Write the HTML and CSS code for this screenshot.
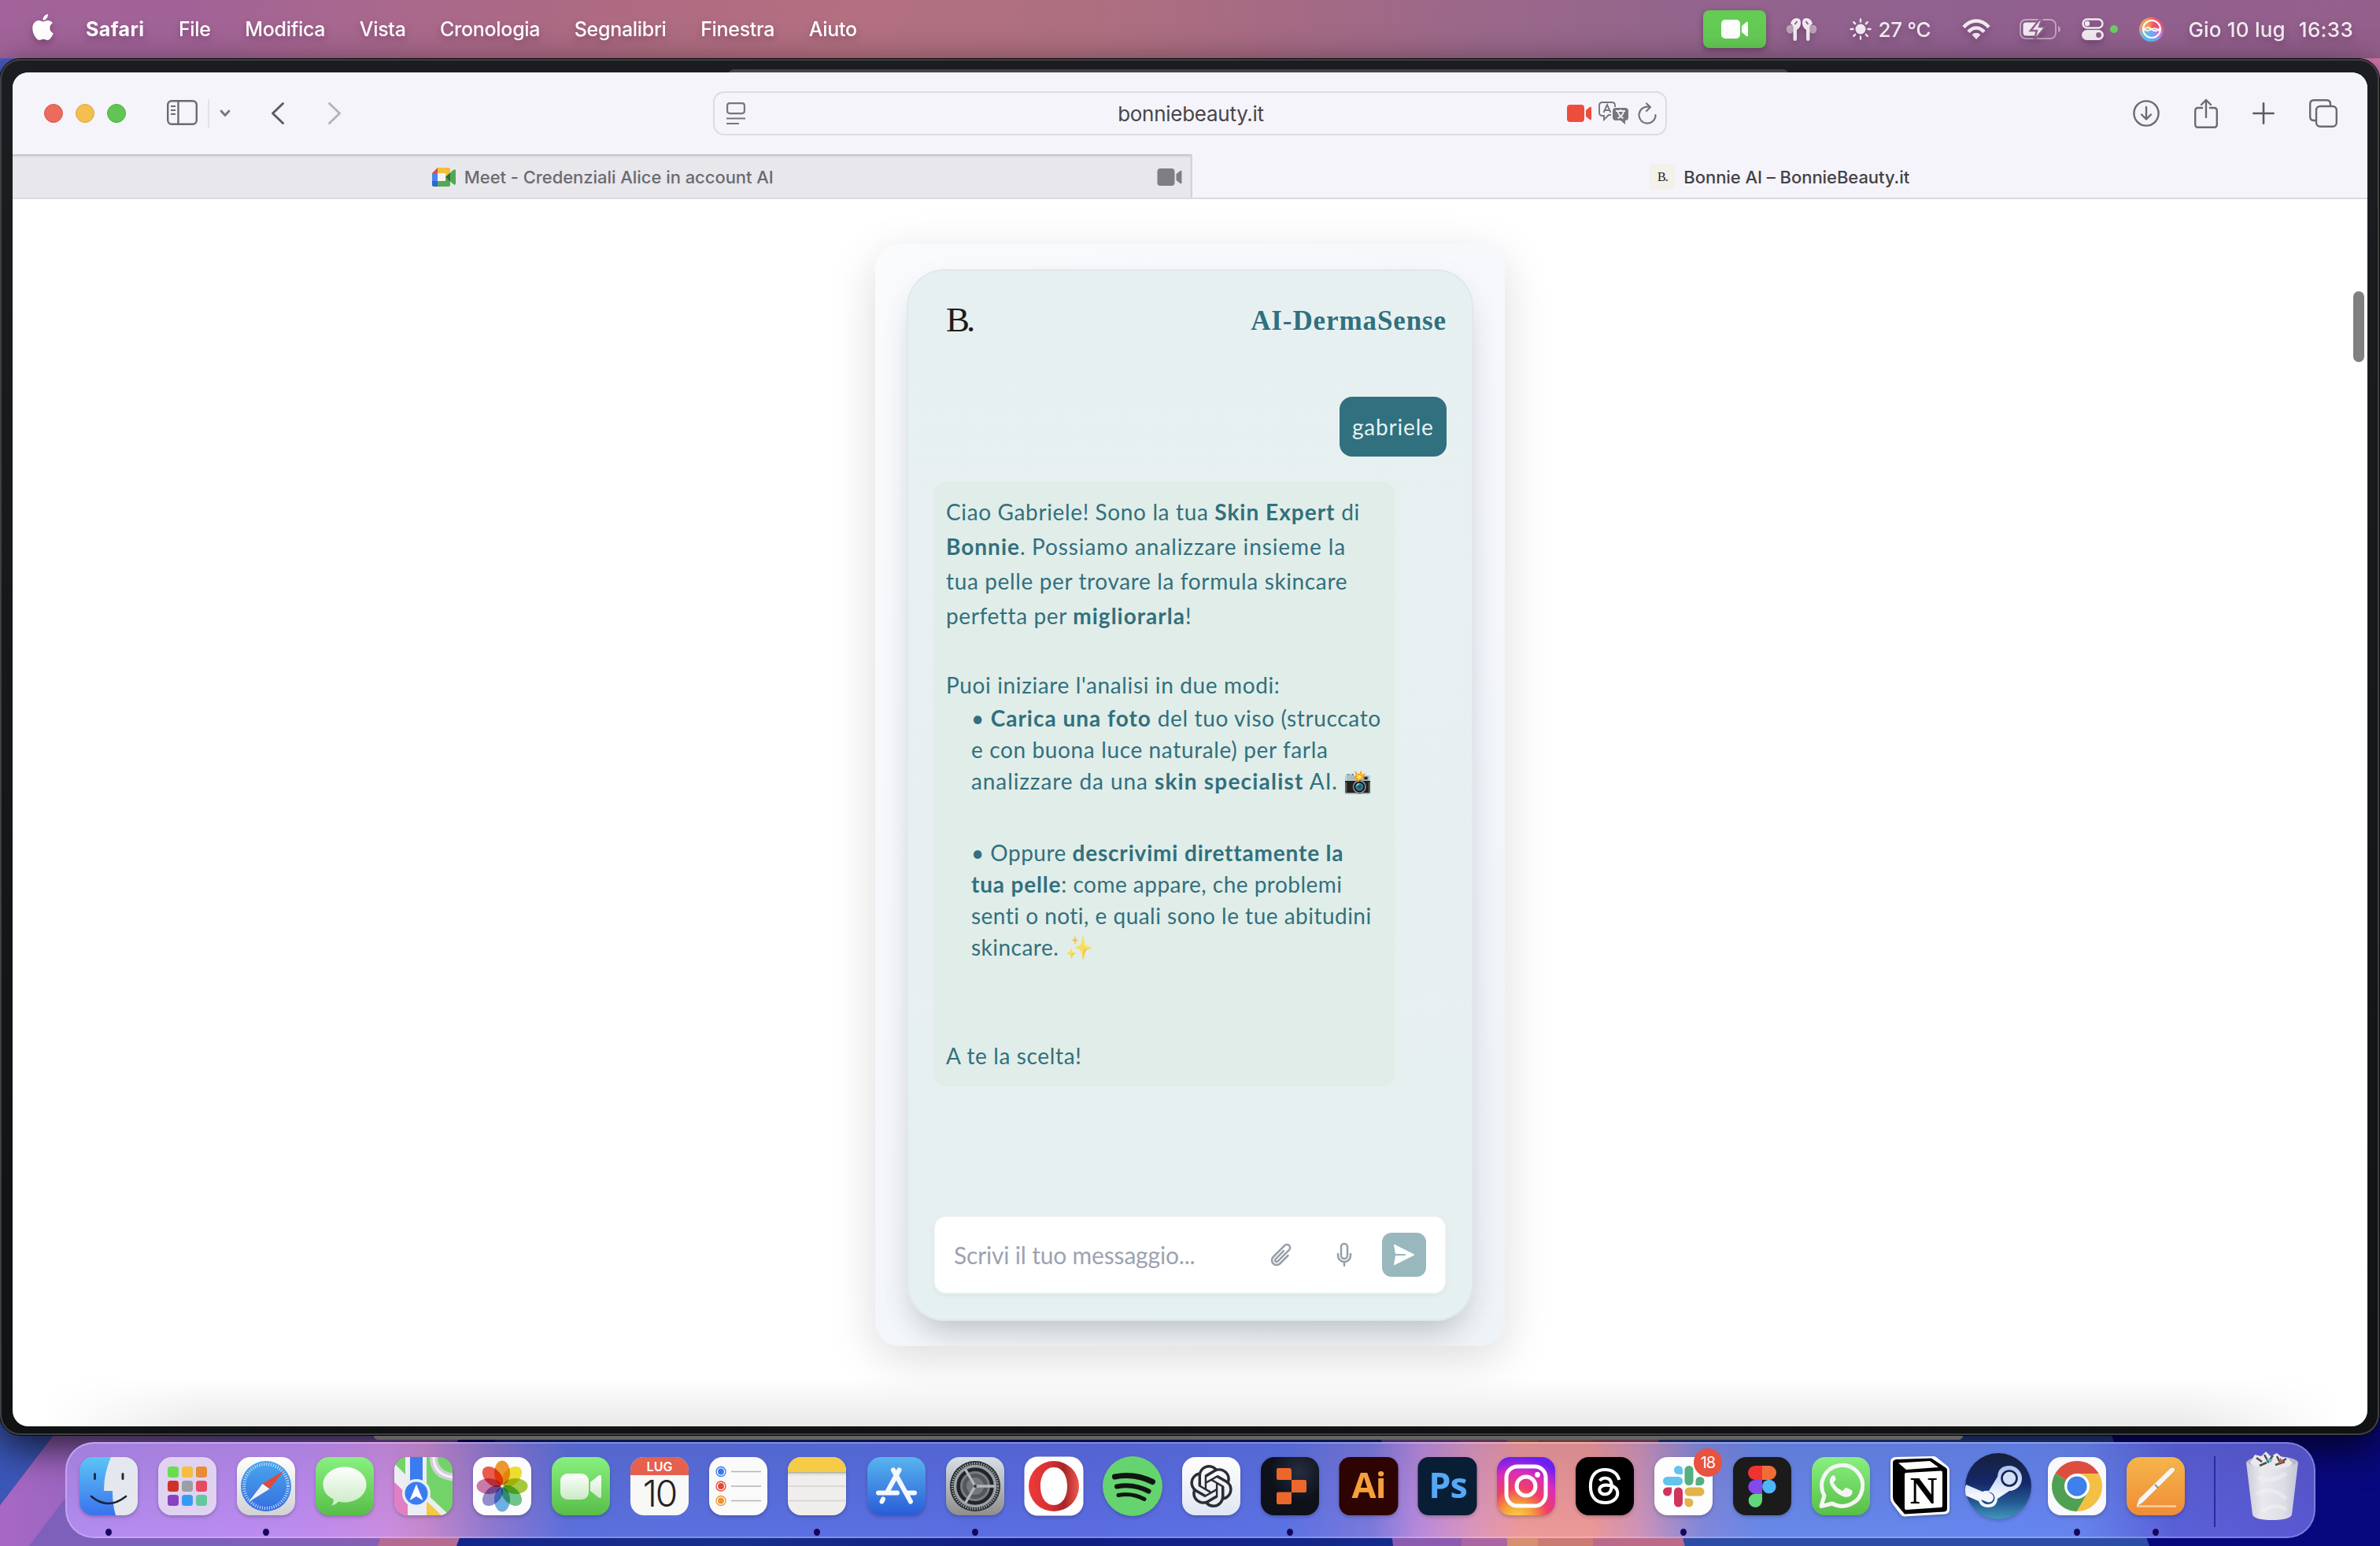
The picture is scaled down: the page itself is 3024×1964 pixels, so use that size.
FILE: index.html
```html
<!DOCTYPE html>
<html lang="it">
<head>
<meta charset="utf-8">
<title>Bonnie AI – BonnieBeauty.it</title>
<link rel="stylesheet" href="styles.css">
</head>
<body>
<svg class="wallpaper" width="3024" height="1964" viewBox="0 0 3024 1964">
  <defs>
    <linearGradient id="wl" x1="0" y1="0" x2="1" y2="0"><stop offset="0" stop-color="#a768c4"/><stop offset=".5" stop-color="#7f60ba"/><stop offset="1" stop-color="#8a5eae"/></linearGradient>
    <linearGradient id="wb" x1="0" y1="0" x2="1" y2="0"><stop offset="0" stop-color="#14258a"/><stop offset=".3" stop-color="#182f8c"/><stop offset=".6" stop-color="#101c7e"/><stop offset="1" stop-color="#152a8c"/></linearGradient>
    <linearGradient id="topline" x1="0" y1="0" x2="1" y2="0"><stop offset="0" stop-color="#4a5cc0"/><stop offset=".2" stop-color="#7a52a8"/><stop offset=".36" stop-color="#b0603c"/><stop offset=".55" stop-color="#b85a60"/><stop offset=".64" stop-color="#23429a"/><stop offset=".86" stop-color="#2a3f9c"/><stop offset=".9" stop-color="#c06a78"/><stop offset="1" stop-color="#d878b4"/></linearGradient>
  </defs>
  <rect width="3024" height="1964" fill="#08087e"/>
  <rect width="3024" height="200" fill="url(#topline)"/>
  <path d="M0 1700H68V1823L0 1912Z" fill="#3b57b8"/>
  <path d="M68 1823L0 1912V1964H500L600 1800H68Z" fill="url(#wl)"/>
  <path d="M85 1900L37 1964H300V1900Z" fill="#7d60ba"/>
  <path d="M500 1900L480 1964H590V1900Z" fill="#b46a92"/>
  <path d="M640 1800L580 1964H1772L1752 1800Z" fill="url(#wb)"/>
  <path d="M1752 1800L1770 1964H1860V1800Z" fill="#8b5bb0"/>
  <path d="M1855 1800H1915V1964H1857Z" fill="#aa66a2"/>
  <path d="M1915 1800H1954V1964H1915Z" fill="#d68f70"/>
  <path d="M1954 1800H2024V1964H1954Z" fill="#cc7a74"/>
  <path d="M2024 1800H2100L2141 1964H2024Z" fill="#bb6a8a"/>
  <path d="M2100 1800H2675L2731 1964H2141Z" fill="#2d4ca6"/>
</svg>

<header class="menubar">
  <svg class="apple" width="27" height="33" viewBox="2 0 20 24" fill="#fff" preserveAspectRatio="none"><path d="M12.152 6.896c-.948 0-2.415-1.078-3.96-1.04-2.04.027-3.91 1.183-4.961 3.014-2.117 3.675-.546 9.103 1.519 12.09 1.013 1.454 2.208 3.09 3.792 3.039 1.52-.065 2.09-.987 3.935-.987 1.831 0 2.35.987 3.96.948 1.637-.026 2.676-1.48 3.676-2.948 1.156-1.688 1.636-3.325 1.662-3.415-.039-.013-3.182-1.221-3.22-4.857-.026-3.04 2.48-4.494 2.597-4.559-1.429-2.09-3.623-2.324-4.39-2.376-2-.156-3.675 1.09-4.61 1.09zM15.53 3.83c.843-1.012 1.4-2.427 1.245-3.83-1.207.052-2.662.805-3.532 1.818-.78.896-1.454 2.338-1.273 3.714 1.338.104 2.715-.688 3.559-1.701"/></svg>
  <nav class="menus">
    <b>Safari</b><span>File</span><span>Modifica</span><span>Vista</span><span>Cronologia</span><span>Segnalibri</span><span>Finestra</span><span>Aiuto</span>
  </nav>
  <div class="status">
    <span class="camera"><svg width="34" height="24" viewBox="0 0 34 24" fill="#fff"><rect width="24" height="24" rx="5"/><path d="M26 8l6-5q2-1 2 1v16q0 2-2 1l-6-5z"/></svg></span>
    <svg class="airpods" width="40" height="32" viewBox="0 0 40 32" fill="#f1e9f0"><ellipse cx="5.500" cy="16" rx="4.800" ry="5.500" opacity=".5"/><ellipse cx="34.500" cy="16" rx="4.800" ry="5.500" opacity=".5"/><path d="M6 9Q8 2 14 2q5 0 5 6t-5 9v12q0 2-2.200 2T9.500 29V18Q11 12 6 9z"/><path d="M34 9Q32 2 26 2q-5 0-5 6t5 9v12q0 2 2.200 2t2.300-2V18Q29 12 34 9z"/><path d="M14.500 6l-3 4M25.500 6l3 4" stroke="#91618d" stroke-width="2"/></svg>
    <svg class="sun" width="28" height="28" viewBox="0 0 28 28" fill="#f1e9f0" stroke="#f1e9f0" stroke-width="2.400" stroke-linecap="round"><circle cx="14" cy="14" r="6.500" stroke="none"/><path d="M14 1.500v3M14 23.500v3M1.500 14h3M23.500 14h3M5.200 5.200l2 2M20.800 20.800l2 2M5.200 22.800l2-2M20.800 7.200l2-2"/></svg>
    <span class="temp">27 °C</span>
    <svg class="wifi" width="36" height="27" viewBox="0 0 36 27" fill="none" stroke="#f1e9f0" stroke-width="4.600"><path d="M2 10.500Q9 2.500 18 2.500t16 8"/><path d="M8 16.500q4.500-5 10-5t10 5"/><path d="M18 26l-5.500-6q5.500-4.500 11 0z" fill="#f1e9f0" stroke="none"/></svg>
    <svg class="battery" width="53" height="28" viewBox="0 0 53 28"><rect x="1" y="2" width="45" height="24" rx="7" fill="none" stroke="#f1e9f0" stroke-opacity=".5" stroke-width="2"/><path d="M49 10q3 1 3 4t-3 4z" fill="#f1e9f0" opacity=".5"/><rect x="4.500" y="5.500" width="20" height="17" rx="4" fill="#f1e9f0"/><path d="M27 0L14 16h8l-4 13L33 11h-8l4-11z" fill="#f1e9f0" stroke="#91618d" stroke-width="2.500"/></svg>
    <svg class="control" width="28" height="28" viewBox="0 0 28 28"><rect x="1.500" y="1.500" width="25" height="11" rx="5.500" fill="none" stroke="#f1e9f0" stroke-width="2.400"/><circle cx="7" cy="7" r="3.200" fill="#f1e9f0"/><rect y="15" width="28" height="13" rx="6.500" fill="#f1e9f0"/><circle cx="21.500" cy="21.500" r="3.400" fill="#91618d"/></svg>
    <i class="privacy"></i>
    <span class="siri"><svg width="30" height="30" viewBox="0 0 30 30" fill="none" stroke="#fff" stroke-width="2"><circle cx="15" cy="15" r="11"/><path d="M4.500 17q4-7 10-2t11-1M4.500 13q3 6 9 2.500T25 17" stroke-width="1.700"/></svg></span>
    <span class="date">Gio 10 lug</span><span class="time">16:33</span>
  </div>
</header>

<main class="frame">
  <i class="peek-top"></i>
  <section class="safari">
    <div class="toolbar">
      <div class="lights"><i class="red"></i><i class="amber"></i><i class="green"></i></div>
      <svg class="side" width="39" height="32" viewBox="0 0 39 32" fill="none" stroke="#6b6a70" stroke-width="2.400"><rect x="1.200" y="1.200" width="36.600" height="29.600" rx="5"/><path d="M14.500 1v30"/><path d="M5 8h6M5 13h6M5 18h6" stroke-width="2"/></svg>
      <i class="rule"></i>
      <svg class="chev" width="14" height="10" viewBox="0 0 14 10" fill="none" stroke="#77767c" stroke-width="2.800" stroke-linecap="round" stroke-linejoin="round"><path d="M2 2l5 5.500L12 2"/></svg>
      <svg class="back" width="18" height="30" viewBox="0 0 18 30" fill="none" stroke="#5c5b61" stroke-width="3" stroke-linecap="round" stroke-linejoin="round"><path d="M15.500 2.500L2.500 15l13 12.500"/></svg>
      <svg class="fwd" width="18" height="30" viewBox="0 0 18 30" fill="none" stroke="#b4b3b9" stroke-width="3" stroke-linecap="round" stroke-linejoin="round"><path d="M2.500 2.500L15.500 15l-13 12.500"/></svg>
      <div class="urlbar">
        <svg width="24" height="28" viewBox="0 0 24 28" fill="none" stroke="#77767c" stroke-width="2.200"><rect x="1.100" y="1.100" width="21.800" height="13" rx="3"/><path d="M0 20.500h24M0 27h16"/></svg>
        <span class="url">bonniebeauty.it</span>
        <svg width="31" height="22" viewBox="0 0 31 22" fill="#ed4e3c"><rect width="22" height="22" rx="4"/><path d="M24 7l5-4q2-1 2 1v14q0 2-2 1l-5-4z"/></svg>
        <svg class="translate" width="40" height="30" viewBox="0 0 40 30" fill="none" stroke="#77767c" stroke-width="1.900"><path d="M16 17h-3l-6 6v-5H5q-4 0-4-4V5q0-4 4-4h12q4 0 4 4v2"/><path d="M6.500 14L11 4 15.500 14M8 11h6"/><path d="M22 8h12q4 0 4 4v8q0 4-4 4v5l-6-5h-6q-4 0-4-4v-8q0-4 4-4z" fill="#77767c" stroke="none"/><path d="M22 12h12M28 10v2M24.500 21.500Q31 18 32 12.500M31.500 21.500Q26 18 24.500 12.500" stroke="#f5f4fa" stroke-width="1.800"/></svg>
        <svg width="24" height="29" viewBox="0 0 24 29" fill="none" stroke="#77767c" stroke-width="2.200" stroke-linecap="round" stroke-linejoin="round"><path d="M14 5.800A10.500 10.500 0 1 0 22.500 16M11 1.500l5 4.500-5 5"/></svg>
      </div>
      <div class="tools">
        <svg width="34" height="34" viewBox="0 0 34 34" fill="none" stroke="#6b6a70" stroke-width="2.400" stroke-linecap="round" stroke-linejoin="round"><circle cx="17" cy="17" r="15.600"/><path d="M17 9v15M11 18.500l6 6 6-6"/></svg>
        <svg width="30" height="38" viewBox="0 0 30 38" fill="none" stroke="#6b6a70" stroke-width="2.400" stroke-linecap="round" stroke-linejoin="round"><path d="M10 12H5q-3.800 0-3.800 3.800V33q0 3.800 3.800 3.800h20q3.800 0 3.800-3.800V15.800Q28.800 12 25 12h-5M15 24V2M9 8l6-6 6 6"/></svg>
        <svg class="plus" width="28" height="28" viewBox="0 0 28 28" stroke="#5c5b61" stroke-width="2.600" stroke-linecap="round"><path d="M14 1.300v25.400M1.300 14h25.400"/></svg>
        <svg width="36" height="36" viewBox="0 0 36 36" fill="none" stroke="#6b6a70" stroke-width="2.400"><rect x="9" y="9" width="25.800" height="25.800" rx="5"/><path d="M8.500 27H6q-4.800 0-4.800-4.800V6Q1.200 1.200 6 1.200h16Q27 1.200 27 6v2.500"/></svg>
      </div>
    </div>
    <div class="tabs">
      <div class="tab idle">
        <svg width="30" height="24" viewBox="0 0 30 24"><path d="M0 7L7 0v7z" fill="#dd4f3e"/><path d="M7 0h14q2 0 2 2v7l-6 5V7H7z" fill="#f3bf3c"/><path d="M0 7h7v10H0z" fill="#4a86ee"/><path d="M0 17h7v7H2q-2 0-2-2z" fill="#2e66c9"/><path d="M7 17h10v-3l6-2v10q0 2-2 2H7z" fill="#52a853"/><path d="M17 12l10-9q3-2 3 1v16q0 3-3 1z" fill="#52a853"/><path d="M17 12l6-5.500v11z" fill="#28703d"/><path d="M7 7h10v10H7z" fill="#f4f4f8"/></svg>
        <span>Meet - Credenziali Alice in account AI</span>
        <svg class="rec" width="32" height="22" viewBox="0 0 31 22" fill="#7f7e84"><rect width="22" height="22" rx="4"/><path d="M24 7l5-4q2-1 2 1v14q0 2-2 1l-5-4z"/></svg>
      </div>
      <div class="tab active"><i class="fav">B.</i><span>Bonnie AI – BonnieBeauty.it</span></div>
    </div>
    <div class="page">
      <article class="stage">
        <div class="chat">
          <div class="chat-head"><span class="mark">B.</span><h1>AI-DermaSense</h1></div>
          <div class="msg me">gabriele</div>
          <div class="msg bot">
            <p>Ciao Gabriele! Sono la tua <b>Skin Expert</b> di<br><b>Bonnie</b>. <span class="wide">Possiamo analizzare insieme la</span><br>tua pelle per trovare la formula skincare<br>perfetta per <b>migliorarla</b>!</p>
            <p class="gap">Puoi iniziare l'analisi in due modi:</p>
            <ul>
              <li>• <b>Carica una foto</b> del tuo viso (struccato<br>e con buona luce naturale) per farla<br><span class="wide">analizzare da una <b>skin specialist</b> AI.</span> <span class="emoji">📸</span></li>
              <li class="snug">• Oppure <b>descrivimi direttamente la<br>tua pelle</b>: come appare, che problemi<br>senti o noti, e quali sono le tue abitudini<br>skincare. <span class="emoji spark">✨</span></li>
            </ul>
            <p class="end">A te la scelta!</p>
          </div>
          <div class="composer">
            <span class="hint">Scrivi il tuo messaggio...</span>
            <svg class="clip" width="32" height="32" viewBox="0 0 24 24" fill="none" stroke="#979eab" stroke-width="1.900" stroke-linecap="round" stroke-linejoin="round"><path d="M18.375 12.739l-7.693 7.693a4.500 4.500 0 0 1-6.364-6.364l10.940-10.940A3 3 0 1 1 19.500 7.372L8.552 18.320m.009-.010l-.010.010m5.699-9.941l-7.810 7.810a1.500 1.500 0 0 0 2.112 2.130l7.693-7.700"/></svg>
            <svg class="mic" width="32" height="32" viewBox="0 0 24 24" fill="none" stroke="#979eab" stroke-width="1.900" stroke-linecap="round" stroke-linejoin="round"><path d="M12 18.750a6 6 0 0 0 6-6v-1.500m-6 7.500a6 6 0 0 1-6-6v-1.500m6 7.500v3.500M12 15.750a3 3 0 0 1-3-3V4.500a3 3 0 1 1 6 0v8.250a3 3 0 0 1-3 3z"/></svg>
            <span class="send"><svg width="28" height="28" viewBox="0 0 28 28"><path d="M1 1.500Q1 .5 2 1l24.500 12.200q1.400.8 0 1.600L2 27q-1 .5-1-.5L3.200 14z" fill="#fff"/><path d="M3 14h13" stroke="#99b8be" stroke-width="2.200"/></svg></span>
          </div>
        </div>
      </article>
      <i class="thumb"></i>
      <i class="shade"></i>
    </div>
  </section>
</main>
<div class="backwin"></div>

<footer class="dock">
  <div class="app open"><svg viewBox="0 0 74 74"><defs><linearGradient id="a1" x2="0" y2="1"><stop stop-color="#5cc4f6"/><stop offset="1" stop-color="#3a72ee"/></linearGradient><clipPath id="sq"><rect width="74" height="74" rx="17"/></clipPath></defs><g clip-path="url(#sq)"><rect width="74" height="74" fill="url(#a1)"/><path d="M40 0Q31 20 31 43h11q0 18 4 31h28V0z" fill="#e4e8ee"/></g><path d="M19.500 21.500v6M55 21.500v6" stroke="#222c3c" stroke-width="3" stroke-linecap="round"/><path d="M15 50q21 18 44 0" fill="none" stroke="#1c2432" stroke-width="2.600" stroke-linecap="round"/></svg></div>
  <div class="app"><svg viewBox="0 0 74 74"><rect width="74" height="74" rx="17" fill="#dfd3f1"/><rect x="12" y="12" width="14" height="14" rx="3.500" fill="#6bdb50"/><rect x="30" y="12" width="14" height="14" rx="3.500" fill="#f3bf3d"/><rect x="48" y="12" width="14" height="14" rx="3.500" fill="#e88c35"/><rect x="12" y="30" width="14" height="14" rx="3.500" fill="#cc3428"/><rect x="30" y="30" width="14" height="14" rx="3.500" fill="#9b9fa4"/><rect x="48" y="30" width="14" height="14" rx="3.500" fill="#ea4a60"/><rect x="12" y="48" width="14" height="14" rx="3.500" fill="#8a3fc4"/><rect x="30" y="48" width="14" height="14" rx="3.500" fill="#389bf2"/><rect x="48" y="48" width="14" height="14" rx="3.500" fill="#62c89c"/></svg></div>
  <div class="app open"><svg viewBox="0 0 74 74"><defs><linearGradient id="a3" x2="0" y2="1"><stop stop-color="#fff"/><stop offset="1" stop-color="#d2d2d4"/></linearGradient><linearGradient id="a3b" x2="0" y2="1"><stop stop-color="#4aa6ec"/><stop offset="1" stop-color="#356ee0"/></linearGradient></defs><rect width="74" height="74" rx="17" fill="url(#a3)"/><circle cx="37" cy="37" r="32" fill="url(#a3b)"/><circle cx="37" cy="37" r="28" fill="none" stroke="#cfe3fa" stroke-width="4" stroke-dasharray="1 2"/><path d="M60 17L32.500 34l9 6.500z" fill="#e0493c"/><path d="M15 57l17.500-23 9 6.500z" fill="#f2f2f4"/></svg></div>
  <div class="app"><svg viewBox="0 0 74 74"><defs><linearGradient id="gr" x2="0" y2="1"><stop stop-color="#88f080"/><stop offset="1" stop-color="#58be48"/></linearGradient><linearGradient id="wh" x2="0" y2="1"><stop stop-color="#fdfffd"/><stop offset="1" stop-color="#cbeac4"/></linearGradient></defs><rect width="74" height="74" rx="17" fill="url(#gr)"/><path d="M37 12.500c15 0 27.500 9.500 27.500 22.500S52 57.500 37 57.500q-4 0-8-1-3 4-9 5 3.500-4 2.500-8Q9.500 47 9.500 35C9.500 22 22 12.500 37 12.500z" fill="url(#wh)"/></svg></div>
  <div class="app"><svg viewBox="0 0 74 74"><g clip-path="url(#sq)"><rect width="74" height="74" fill="#72d468"/><path d="M0 8l70 66H0z" fill="#ecedf2"/><path d="M0 32l18 16v26H0z" fill="#e07fc4"/><path d="M40 74V55l20 19z" fill="#f4c843"/><path d="M14 0h27v74H17V50L0 30V8l14 14z" fill="#eceef3"/><path d="M0 8V0h14v22z" fill="#72d468"/><path d="M20 0h16v40H20z" fill="#3a7cf0"/><path d="M50 0q0 24 28 26" fill="none" stroke="#cfd0d6" stroke-width="10"/><path d="M50 0q0 24 28 26" fill="none" stroke="#f3f3f6" stroke-width="3"/></g><circle cx="28" cy="46" r="18" fill="#e9ecf4"/><circle cx="28" cy="46" r="14.500" fill="#3a7cf0"/><path d="M28 34.500l8.500 20.500-8.500-5-8.500 5z" fill="#fff"/></svg></div>
  <div class="app"><svg viewBox="0 0 74 74"><rect width="74" height="74" rx="17" fill="#fcfcfd"/><g class="petals"><ellipse cx="37" cy="20" rx="10" ry="15.500" fill="#f09a2e"/><ellipse cx="37" cy="20" rx="10" ry="15.500" fill="#f0e030" transform="rotate(45 37 37)"/><ellipse cx="37" cy="20" rx="10" ry="15.500" fill="#a8cc3c" transform="rotate(90 37 37)"/><ellipse cx="37" cy="20" rx="10" ry="15.500" fill="#6fc88a" transform="rotate(135 37 37)"/><ellipse cx="37" cy="20" rx="10" ry="15.500" fill="#70b2e2" transform="rotate(180 37 37)"/><ellipse cx="37" cy="20" rx="10" ry="15.500" fill="#9490d0" transform="rotate(225 37 37)"/><ellipse cx="37" cy="20" rx="10" ry="15.500" fill="#cc7aac" transform="rotate(270 37 37)"/><ellipse cx="37" cy="20" rx="10" ry="15.500" fill="#ee5c4c" transform="rotate(315 37 37)"/></g></svg></div>
  <div class="app"><svg viewBox="0 0 74 74"><rect width="74" height="74" rx="17" fill="url(#gr)"/><rect x="11" y="21" width="36" height="33" rx="9" fill="url(#wh)"/><path d="M49 32l10-8q4-2.500 4 1v25q0 3.500-4 1l-10-8z" fill="url(#wh)"/></svg></div>
  <div class="app"><div class="calendar"><span>LUG</span><b>10</b></div></div>
  <div class="app"><svg viewBox="0 0 74 74"><rect width="74" height="74" rx="17" fill="#fbfafa"/><g stroke="#b4b3b5" stroke-width="1.400"><path d="M28 18.500h38M28 37h38M28 55.500h38"/></g><g fill="none" stroke-width="1.300"><circle cx="15" cy="18.500" r="6" stroke="#3478f0"/><circle cx="15" cy="37" r="6" stroke="#e04a36"/><circle cx="15" cy="55.500" r="6" stroke="#ec9530"/></g><circle cx="15" cy="18.500" r="3.900" fill="#3478f0"/><circle cx="15" cy="37" r="3.900" fill="#e04a36"/><circle cx="15" cy="55.500" r="3.900" fill="#ec9530"/></svg></div>
  <div class="app open"><svg viewBox="0 0 74 74"><g clip-path="url(#sq)"><rect width="74" height="74" fill="#efeeec"/><rect width="74" height="19" fill="#f6cb45"/><path d="M0 20h74" stroke="#a8a49a" stroke-width="1.400"/><path d="M0 22.500h74" stroke="#c2beb4" stroke-dasharray="1.500 1.500"/><path d="M0 37h74M0 55.500h74" stroke="#d3d2d0" stroke-width="1.500"/></g></svg></div>
  <div class="app shift"><svg viewBox="0 0 74 74"><defs><linearGradient id="as" x2="0" y2="1"><stop stop-color="#58b4ee"/><stop offset="1" stop-color="#2a5cd8"/></linearGradient></defs><rect width="74" height="74" rx="17" fill="url(#as)"/><g stroke="#f4f8ff" stroke-width="6" stroke-linecap="round"><path d="M33 16.500l22 40M40.500 16.500L26 43M20 53.500L18.500 56.500M14 45.500h24M52 45.500h8"/></g></svg></div>
  <div class="app open"><svg viewBox="0 0 74 74"><defs><linearGradient id="se" x2="0" y2="1"><stop stop-color="#d6e0e6"/><stop offset="1" stop-color="#8f8e8c"/></linearGradient></defs><rect width="74" height="74" rx="17" fill="url(#se)"/><circle cx="37" cy="37" r="32" fill="#22262a"/><circle cx="37" cy="37" r="29" fill="none" stroke="#9da3a6" stroke-width="3" stroke-dasharray="1.500 1.500"/><circle cx="37" cy="37" r="25.500" fill="none" stroke="#9ca2a5" stroke-width="3.500"/><circle cx="37" cy="37" r="17.500" fill="#54585b" stroke="#777d80" stroke-width="3"/><circle cx="37" cy="37" r="11" fill="#74797c"/><path d="M37 37h25M37 37L24.500 15.500M37 37L24.500 58.500" stroke="#b3b8ba" stroke-width="3.400"/><circle cx="37" cy="37" r="2" fill="#333"/></svg></div>
  <div class="app"><svg viewBox="0 0 74 74"><rect x="-.5" y="-.5" width="75" height="75" rx="17" fill="#fff"/><defs><linearGradient id="op"><stop stop-color="#ee3a3a"/><stop offset=".45" stop-color="#d42f33"/><stop offset=".7" stop-color="#a82426"/><stop offset="1" stop-color="#ef5a52"/></linearGradient></defs><path fill-rule="evenodd" d="M37 5a32 32 0 1 1 0 64 32 32 0 0 1 0-64zm0 8c-11 0-17 11-17 24s6 24 17 24 17-11 17-24-6-24-17-24z" fill="url(#op)"/></svg></div>
  <div class="app"><svg viewBox="0 0 74 74"><circle cx="37" cy="37" r="38" fill="#65d46e"/><g fill="none" stroke="#101612" stroke-linecap="round"><path d="M14.500 25q25-5 48 6.500" stroke-width="7"/><path d="M17 37.500q21-4.500 40.500 6" stroke-width="6"/><path d="M19 48.500q17-3.500 33 5" stroke-width="5"/></g></svg></div>
  <div class="app"><svg viewBox="0 0 74 74"><defs><linearGradient id="gp" x2="0" y2="1"><stop stop-color="#fff"/><stop offset="1" stop-color="#dfe6f2"/></linearGradient></defs><rect width="74" height="74" rx="17" fill="url(#gp)"/><path transform="translate(10 10) scale(2.250)" fill="#2a2e33" d="M22.282 9.821a5.985 5.985 0 0 0-.516-4.911 6.046 6.046 0 0 0-6.510-2.900A6.065 6.065 0 0 0 4.981 4.182a5.985 5.985 0 0 0-3.998 2.900 6.046 6.046 0 0 0 .743 7.097 5.980 5.980 0 0 0 .511 4.911 6.051 6.051 0 0 0 6.515 2.900A5.985 5.985 0 0 0 13.260 24a6.056 6.056 0 0 0 5.772-4.206 5.989 5.989 0 0 0 3.998-2.900 6.056 6.056 0 0 0-.748-7.073zm-9.022 12.608a4.476 4.476 0 0 1-2.876-1.041l.142-.080 4.778-2.758a.795.795 0 0 0 .393-.681v-6.737l2.020 1.169a.071.071 0 0 1 .038.052v5.583a4.504 4.504 0 0 1-4.495 4.494zm-9.661-4.125a4.471 4.471 0 0 1-.535-3.014l.142.085 4.783 2.758a.771.771 0 0 0 .781 0l5.843-3.369v2.332a.080.080 0 0 1-.033.062L9.740 19.950a4.499 4.499 0 0 1-6.141-1.646zM2.341 7.896a4.485 4.485 0 0 1 2.366-1.973V11.600a.766.766 0 0 0 .388.677l5.814 3.354-2.020 1.169a.076.076 0 0 1-.071 0l-4.830-2.787A4.504 4.504 0 0 1 2.341 7.872zm16.596 3.856L13.104 8.364 15.119 7.200a.076.076 0 0 1 .071 0l4.830 2.791a4.494 4.494 0 0 1-.677 8.104v-5.677a.790.790 0 0 0-.407-.667zm2.011-3.023l-.142-.085-4.774-2.782a.776.776 0 0 0-.785 0L9.409 9.230V6.897a.066.066 0 0 1 .028-.062l4.830-2.787a4.499 4.499 0 0 1 6.680 4.660zM8.307 12.863l-2.020-1.164a.080.080 0 0 1-.038-.057V6.074a4.499 4.499 0 0 1 7.376-3.454l-.142.081L8.704 5.459a.795.795 0 0 0-.393.681zm1.098-2.365l2.602-1.500 2.607 1.500v2.999l-2.597 1.500-2.607-1.500z"/></svg></div>
  <div class="app open"><svg viewBox="0 0 74 74"><defs><radialGradient id="rp" cx=".65" cy=".25"><stop stop-color="#262d40"/><stop offset="1" stop-color="#0e1119"/></radialGradient></defs><rect width="74" height="74" rx="17" fill="url(#rp)"/><path d="M22 14h14q3 0 3 3v12H22q-2 0-2-2V16q0-2 2-2zM39 29h17q2 0 2 2v12q0 2-2 2H39zM22 44.500h17V58q0 2-2 2H22q-2 0-2-2V46.500q0-2 2-2z" fill="#ec672c"/></svg></div>
  <div class="app"><svg viewBox="0 0 74 74"><rect x="-.5" width="75" height="74" rx="14" fill="#2e0403"/><text x="37" y="52" text-anchor="middle" class="adobe" fill="#f5a13b">Ai</text></svg></div>
  <div class="app"><svg viewBox="0 0 74 74"><rect x="-.5" width="75" height="74" rx="14" fill="#071e35"/><text x="37.500" y="52" text-anchor="middle" class="adobe" fill="#54a8f8">Ps</text></svg></div>
  <div class="app"><svg viewBox="0 0 74 74"><defs><radialGradient id="ig" cx=".35" cy="1.050" r="1.050"><stop stop-color="#f9d44a"/><stop offset=".25" stop-color="#f6a038"/><stop offset=".5" stop-color="#ee3f66"/><stop offset=".75" stop-color="#dc2cb8"/><stop offset="1" stop-color="#6a20f4"/></radialGradient></defs><rect width="74" height="74" rx="17" fill="url(#ig)"/><rect x="12" y="12" width="50" height="50" rx="14" fill="none" stroke="#fff" stroke-width="5"/><circle cx="37" cy="37" r="12" fill="none" stroke="#fff" stroke-width="5"/><circle cx="51.500" cy="22.500" r="3.400" fill="#fff"/></svg></div>
  <div class="app"><svg viewBox="0 0 74 74"><rect width="74" height="74" rx="17"/><path transform="translate(14 14) scale(1.920)" fill="#fff" d="M12.186 24h-.007c-3.581-.024-6.334-1.205-8.184-3.509C2.350 18.440 1.500 15.586 1.472 12.010v-.017c.030-3.579.879-6.430 2.525-8.482C5.845 1.205 8.600.024 12.180 0h.014c2.746.020 5.043.725 6.826 2.098 1.677 1.290 2.858 3.130 3.509 5.467l-2.040.569c-1.104-3.960-3.898-5.984-8.304-6.015-2.910.022-5.110.936-6.540 2.717C4.307 6.504 3.616 8.914 3.589 12c.027 3.086.718 5.496 2.057 7.164 1.430 1.783 3.631 2.698 6.540 2.717 2.623-.020 4.358-.631 5.800-2.045 1.647-1.613 1.618-3.593 1.090-4.798-.310-.710-.873-1.300-1.634-1.750-.192 1.352-.622 2.446-1.284 3.272-.886 1.102-2.140 1.704-3.730 1.790-1.202.065-2.361-.218-3.259-.801-1.063-.689-1.685-1.740-1.752-2.964-.065-1.190.408-2.285 1.330-3.082.880-.760 2.119-1.207 3.583-1.291a13.853 13.853 0 0 1 3.020.142c-.126-.742-.375-1.332-.750-1.757-.513-.586-1.308-.883-2.359-.890h-.029c-.844 0-1.992.232-2.721 1.320L7.734 7.847c.980-1.454 2.568-2.256 4.478-2.256h.044c3.194.020 5.097 1.975 5.287 5.388.108.046.216.094.321.142 1.490.700 2.580 1.761 3.154 3.070.797 1.820.871 4.790-1.548 7.158-1.850 1.810-4.094 2.628-7.277 2.650zm1.003-11.690c-.242 0-.487.007-.739.021-1.836.103-2.980.946-2.916 2.143.067 1.256 1.452 1.839 2.784 1.767 1.224-.065 2.818-.543 3.086-3.710a10.500 10.500 0 0 0-2.215-.221z"/></svg></div>
  <div class="app open"><svg viewBox="0 0 74 74"><rect width="74" height="74" rx="17" fill="#fdfdfe"/><g fill="#62c3ee"><path d="M36 22h-5.500a5.500 5.500 0 1 1 5.500-5.500z"/><rect x="11" y="25" width="25" height="11" rx="5.500"/></g><g fill="#54b07e"><rect x="38.500" y="11" width="11" height="25" rx="5.500"/><path d="M52.500 36v-5.500A5.500 5.500 0 1 1 58 36z"/></g><g fill="#e3b34a"><rect x="38.500" y="38.500" width="25" height="11" rx="5.500"/><path d="M38.500 52.500H44a5.500 5.500 0 1 1-5.500 5.500z"/></g><g fill="#d0335c"><rect x="25" y="38.500" width="11" height="25" rx="5.500"/><path d="M22 38.500V44a5.500 5.500 0 1 1-5.500-5.500z"/></g></svg><em>18</em></div>
  <div class="app"><svg viewBox="0 0 74 74"><rect width="74" height="74" rx="17" fill="#1c1b1b"/><path d="M37 11v18h-9a9 9 0 0 1 0-18z" fill="#ee3430"/><path d="M37 11h9a9 9 0 0 1 0 18h-9z" fill="#ef6e38"/><path d="M37 29v17.500h-9a8.750 8.750 0 0 1 0-17.500z" fill="#8547ee"/><circle cx="45.800" cy="37.500" r="8.800" fill="#50b4f8"/><path d="M37 46.500V55a8.700 8.700 0 1 1-9-8.500z" fill="#62d67a"/></svg></div>
  <div class="app"><svg viewBox="0 0 74 74"><rect width="74" height="74" rx="17" fill="url(#gr)"/><path d="M12 62.500l4-13.500A26 26 0 1 1 26 59z" fill="none" stroke="#f5f6f4" stroke-width="5" stroke-linejoin="round"/><path d="M29 23.500q-2-1-4 1-4 5-.5 12 6 10.500 16.500 14 7 1.500 10-3.500 1.500-4-.5-5l-6-3q-1.500-.5-2.700 1l-2.500 3q-7.500-3-11.800-10.500l2.500-3q.8-1 .3-2.500z" fill="#f5f6f4"/></svg></div>
  <div class="app"><svg viewBox="0 0 74 74"><path d="M6 0L52 -1Q56 -1.500 58 0L73 12Q75 14 75 17V66Q75 72 69 72.500L18 75.500Q15 75.500 13 73L3 60Q0 56 0 52V6Q0 1 6 0z" fill="#fff"/><path d="M7 3L52 1.500 71 14Q72 15 72 17V65Q72 69 68 69.500L18 72.500 5 57Q3 54 3 50V7Q3 4 7 3z"/><path d="M10 7.500L50 5 61 13 20 16z" fill="#fff"/><path d="M18 22q0-2 2-2L64 17.500q2 0 2 2V62q0 2-2 2L20 67q-2 0-2-2z" fill="#fff"/><text x="42" y="59" text-anchor="middle" class="notion">N</text></svg></div>
  <div class="app steam"><svg viewBox="0 0 84 84"><defs><linearGradient id="st" x2="0" y2="1"><stop stop-color="#15203a"/><stop offset=".45" stop-color="#15286a"/><stop offset=".75" stop-color="#235c94"/><stop offset="1" stop-color="#4298bc"/></linearGradient><linearGradient id="sw" x2="0" y2="1"><stop stop-color="#a9c0f0"/><stop offset=".7" stop-color="#f4f6fe"/></linearGradient></defs><circle cx="42" cy="42" r="42" fill="url(#st)"/><path d="M1 40L22 49q4-2 8-1L41 30Q42 16 56 16A16 16 0 0 1 56 48L41 58Q40 69 29 69 20 69 17 61L1 54Q-1 47 1 40z" fill="url(#sw)"/><circle cx="56" cy="32" r="9.500" fill="#d3def7" stroke="#15244e" stroke-width="2.600"/><path d="M20 59q3 6 9 6 8-1 8.500-8Q37 50 29 49l5 3q3 3 1.500 7-3 5-8 3z" fill="#1e4684"/></svg></div>
  <div class="app open"><svg viewBox="0 0 74 74"><rect width="74" height="74" rx="17" fill="#f8f8fd"/><path d="M37 37L9.300 21A32 32 0 0 1 64.700 21z" fill="#dc4f3e"/><path d="M37 37L9.300 21A32 32 0 0 0 37 69L50.900 45z" fill="#4fa052"/><path d="M37 21h27.700A32 32 0 0 1 37 69l13.900-24z" fill="#f3c044"/><circle cx="37" cy="37" r="16" fill="#fff"/><circle cx="37" cy="37" r="12.600" fill="#3f80ea"/></svg></div>
  <div class="app open"><svg viewBox="0 0 74 74"><defs><linearGradient id="pg" x2="0" y2="1"><stop stop-color="#f5b54a"/><stop offset="1" stop-color="#ef8c38"/></linearGradient></defs><rect width="74" height="74" rx="17" fill="url(#pg)"/><path d="M13 62.500h50" stroke="#fbd0a4" stroke-width="2.400"/><path d="M12.500 62.500L16 53 55 15q3-2.500 5-1t-.5 5L20 58z" fill="#f6f5f6"/><path d="M36 35l4 4" stroke="#888" stroke-width="2"/></svg></div>
  <i class="split"></i>
  <svg class="trash" width="68" height="88" viewBox="0 0 68 88"><defs><linearGradient id="tr"><stop stop-color="#c9cbd8"/><stop offset=".3" stop-color="#e9e9ee"/><stop offset=".7" stop-color="#dedfe6"/><stop offset="1" stop-color="#c4c6d6"/></linearGradient></defs><ellipse cx="34" cy="14" rx="33" ry="8" fill="#b7b8cc"/><path d="M6 14L12 4l8 2 6-6 6 6 8-4 6 5 8 1 6 7-8 8H14z" fill="#e9e9ea"/><path d="M14 8l7 5M24 4l5 9 6-8M40 6l4 8 8-5M18 18l9-4M38 17l12-4" stroke="#4d4d52" stroke-width="2.500" fill="none"/><path d="M26 10l6 4 3-5z" fill="#4fc0d8"/><path d="M44 8l5 5-7 3z" fill="#c0574c"/><path d="M1 14q33 16 66 0L59 80q-2 7-25 7T9 80z" fill="url(#tr)"/><path d="M16 32q12 10 36-4M14 54q18-12 38 6M22 76q14-12 30-2" stroke="#f5f5f8" stroke-width="5" fill="none" opacity=".45"/></svg>
</footer>
</body>
</html>
```
FILE: styles.css
```css
* { box-sizing: border-box; }
body {
  margin: 0; width: 3024px; height: 1964px; overflow: hidden; position: relative;
  display: flex; flex-direction: column; background: #08087e;
  font-family: Inter, "Liberation Sans", sans-serif;
}
svg { display: block; flex: none; }
i, em { font-style: normal; }
.wallpaper { position: absolute; left: 0; top: 0; }

/* menu bar */
.menubar {
  position: relative; height: 74px; flex: none; display: flex; align-items: center; padding: 0 34px 0 41px;
  background: linear-gradient(90deg, #a16399 0, #a16397 230px, #a9688c 500px, #ad6a82 750px, #b37081 1080px, #ad6f80 1400px, #a56a84 1640px, #9a688a 1900px, #93648c 2150px, #90608f 2500px, #945f8b 3024px);
  color: #fff; font-size: 25px; font-weight: 500; letter-spacing: -.3px; white-space: pre;
}
.menubar svg, .menus { filter: drop-shadow(0 4px 4px rgba(40, 0, 40, .28)); }
.apple { margin-top: -6px; }
.menus { display: flex; gap: 43.500px; margin-left: 41px; }
.menus b { font-weight: 700; letter-spacing: .4px; }
.status { display: flex; align-items: center; margin-left: auto; color: #f3ecf2; font-size: 26px; letter-spacing: 0; }
.status .date, .status .time, .status .temp { filter: drop-shadow(0 4px 4px rgba(40, 0, 40, .28)); }
.camera { width: 80px; height: 48px; border-radius: 8px; background: #64cb55; display: flex; align-items: center; justify-content: center; box-shadow: 0 3px 8px rgba(40, 0, 40, .35); }
.menubar .camera svg, .menubar .siri svg { filter: none; }
.airpods { margin-left: 25px; }
.sun { margin-left: 41px; }
.temp { margin-left: 8px; width: 68px; letter-spacing: -.3px; }
.wifi { margin-left: 39px; }
.battery { margin-left: 37px; }
.control { margin-left: 26px; }
.privacy { width: 10px; height: 10px; border-radius: 50%; background: #64d060; margin-left: 8px; }
.siri { width: 31px; height: 31px; border-radius: 50%; margin-left: 27px; display: flex; align-items: center; justify-content: center; background: conic-gradient(from 20deg, #f0566c, #e8507c, #c07fe0, #62b4f4, #5fc0ee, #e0a080, #f0a050, #f0566c); }
.date { margin-left: 31px; letter-spacing: .2px; }
.time { margin-left: 17px; letter-spacing: .3px; }

/* stacked windows */
.backwin { position: absolute; left: 475px; top: 1824px; width: 2019px; height: 5px; border-radius: 0 0 12px 12px; background: #646362; }
.frame {
  position: relative; margin-top: 1px; width: 3023px; height: 1748px; padding: 17px 15px 11px 16px; border-radius: 26px;
  background: linear-gradient(#1c1d20, #111213); box-shadow: inset 0 0 0 2px #3f4042, 0 0 0 1px #050506, 0 16px 50px rgba(0, 0, 0, .75);
}
.peek-top { position: absolute; left: 925px; top: 13px; width: 1348px; height: 20px; border-radius: 8px 8px 0 0; background: #434446; }
.safari { position: relative; width: 2992px; height: 1720px; border-radius: 20px; overflow: hidden; background: #fff; display: flex; flex-direction: column; }
.toolbar { height: 104px; flex: none; background: #f5f4fa; display: flex; align-items: center; padding: 0 38px 0 40px; }
.lights { display: flex; gap: 16px; }
.lights i { width: 24px; height: 24px; border-radius: 50%; }
.red { background: #ec6a5e; border: 1px solid #d85749; }
.amber { background: #f4bf4f; border: 1px solid #dca63c; }
.green { background: #61c554; border: 1px solid #50ab44; }
.side { margin-left: 52px; margin-top: -2px; }
.rule { width: 2px; height: 36px; background: #e2e1e7; margin-left: 13px; }
.chev { margin-left: 13px; }
.back { margin-left: 51px; }
.fwd { margin-left: 54px; }
.back, .fwd { margin-top: -1px; }
.urlbar { width: 1212px; height: 56px; margin-left: 472px; border: 2px solid #dddce2; border-radius: 14px; display: flex; align-items: center; padding: 0 11px 0 15px; }
.url { flex: 1; text-align: center; font-size: 26px; letter-spacing: -.27px; color: #47464b; padding-left: 88px; }
.translate { margin: 0 10px 0 9px; }
.tools { display: flex; align-items: center; margin-left: auto; gap: 44px; }
.tabs { height: 57px; flex: none; display: flex; border-bottom: 2px solid #dbdadf; background: #f5f4fa; }
.tab { flex: 1; position: relative; display: flex; align-items: center; justify-content: center; font-size: 22px; font-weight: 500; letter-spacing: -.05px; padding-top: 2px; }
.idle { background: #e8e7ec; color: #6b6a70; gap: 11px; border-right: 2px solid #d3d2d8; box-shadow: inset 0 3px 3px -1px #bdbcc2; padding-left: 3px; }
.rec { position: absolute; right: 11px; top: 18px; }
.active { color: #434247; gap: 11px; }
.fav { width: 32px; height: 32px; background: #f4f0ea; color: #222; font: 16px/32px "Liberation Serif", serif; text-align: center; letter-spacing: -1px; }

/* page */
.page { flex: 1; position: relative; padding-top: 57px; }
.stage {
  width: 800px; height: 1400px; margin: 0 auto; border-radius: 32px; padding: 32px 40px; overflow: hidden;
  background: linear-gradient(135deg, #fafbfd, #f5f7fb 45%, #eef3f7);
}
.page::before { content: ""; position: absolute; left: 1096px; top: 57px; width: 800px; height: 1400px; border-radius: 32px; box-shadow: 0 16px 60px rgba(0, 0, 0, .14); }
.stage, .chat { position: relative; }
.chat {
  height: 1336px; border-radius: 48px; border: 2px solid #e0e8ee; padding: 0 32px; display: flex; flex-direction: column;
  background: linear-gradient(#e7f0f1, #e8eff1 60%, #e5f0f0); box-shadow: 0 24px 44px -16px rgba(0, 0, 0, .22), 0 12px 40px rgba(60, 70, 90, .05);
  font-family: Lato, "Open Sans", sans-serif; color: #31707e;
}
.chat-head { display: flex; justify-content: space-between; align-items: baseline; height: 160px; padding: 37px 0 0 16px; font-family: "Liberation Serif", serif; }
.mark { font-size: 45px; line-height: 50px; letter-spacing: -4px; color: #1d1d1d; }
h1 { margin: -2px 0 0; font-size: 35px; font-weight: 700; letter-spacing: .9px; position: relative; top: -2px; }
.msg { font-size: 28px; line-height: 44px; letter-spacing: .63px; padding: 16px; border-radius: 16px; white-space: nowrap; }
.msg b { letter-spacing: 1px; }
.wide { letter-spacing: .9px; }
.wide b { letter-spacing: 1.200px; }
.snug { letter-spacing: .48px; }
.snug b { letter-spacing: .82px; }
.me { align-self: flex-end; background: #31707e; color: #e7f2f3; letter-spacing: .8px; width: 136px; }
.bot { width: 587px; height: 768px; margin-top: 32px; background: #e1ede8; }
.bot p, .bot ul { margin: 0; padding: 0; list-style: none; }
.bot .gap { margin-top: 44px; }
.bot li { line-height: 40px; padding-left: 32px; }
.bot li + li { margin-top: 51px; }
.bot .end { margin-top: 96px; }
.emoji { font-family: "Noto Color Emoji", sans-serif; font-size: 29px; line-height: 0; letter-spacing: 0; }
.spark { opacity: .75; }
.composer { margin: auto 0 32px; height: 100px; border: 2px solid #eef1f3; border-radius: 16px; background: #fff; display: flex; align-items: center; padding: 0 24px; box-shadow: 0 2px 6px rgba(0, 0, 0, .05); }
.hint { flex: 1; font-size: 30px; letter-spacing: -.18px; color: #9ca3b0; margin-top: -1px; }
.clip { margin-right: 48px; }
.mic { margin-right: 32px; }
.send { width: 56px; height: 56px; border-radius: 12px; background: #99b8be; display: flex; align-items: center; justify-content: center; }
.thumb { position: absolute; right: 4px; top: 117px; width: 14px; height: 90px; border-radius: 7px; background: #808080; }
.shade { position: absolute; left: 0; right: 0; bottom: 0; height: 62px; background: linear-gradient(rgba(0, 0, 0, 0), rgba(0, 0, 0, .085)); mask-image: linear-gradient(90deg, transparent 40px, #000 240px, #000 2760px, transparent 2960px); }

/* dock */
.dock {
  position: absolute; left: 83px; top: 1832px; width: 2859px; height: 122px; border-radius: 36px; padding: 17px 21px 0 16px; border: 2px solid rgba(255, 255, 255, .22);
  background:
    linear-gradient(rgba(20, 20, 60, .1), rgba(20, 20, 60, 0)) padding-box,
    linear-gradient(90deg, #b28bee 0, #bd8cf0 300px, #cb8de0 410px, #c488cc 460px, #9079d0 540px, #5c70dc 640px, #5a70e2 1000px, #5b6ce2 1300px, #5c72e4 1550px, #7b7adc 1660px, #b98adc 1720px, #dc96bc 1790px, #ee999a 1850px, #ec9898 1940px, #cf94b8 2000px, #8088dc 2080px, #6888e8 2160px, #6686f0 2480px, #6684ec 2560px, #5a60d8 2680px, #5a58d2 2859px) border-box;
  display: flex; align-items: flex-start; gap: 26px;
}
.app { position: relative; width: 74px; height: 74px; flex: none; }
.app svg { width: 74px; height: 74px; overflow: visible; filter: drop-shadow(0 2px 2px rgba(0, 0, 0, .22)); }
.petals ellipse { mix-blend-mode: multiply; }
.app.open::after { content: ""; position: absolute; left: 33px; top: 91px; width: 8px; height: 9px; border-radius: 50%; background: #16065e; }
.app.shift { margin-left: 1px; }
.app.steam svg { width: 84px; height: 84px; margin: -5px; }
.app em { position: absolute; left: 50px; top: -11px; width: 36px; height: 36px; border-radius: 50%; background: #e8523f; color: #fff; font-size: 20px; line-height: 36px; text-align: center; letter-spacing: -1px; }
.calendar { width: 74px; height: 74px; border-radius: 17px; overflow: hidden; background: #f8f8f7; text-align: center; }
.calendar span { display: block; height: 23px; line-height: 24px; background: #e5604e; color: #fff; font-size: 16px; font-weight: 600; }
.calendar b { display: block; font-size: 46px; line-height: 46px; font-weight: 300; letter-spacing: -2px; color: #222; }
.adobe { font: 700 45px "Open Sans", sans-serif; letter-spacing: -1px; }
.notion { font: 700 48px "Liberation Serif", serif; }
.split { flex: none; width: 2px; height: 90px; margin: -1px 0 0 11px; background: #2c2a9c; }
.trash { margin: -7px 0 0 12px; }
```
